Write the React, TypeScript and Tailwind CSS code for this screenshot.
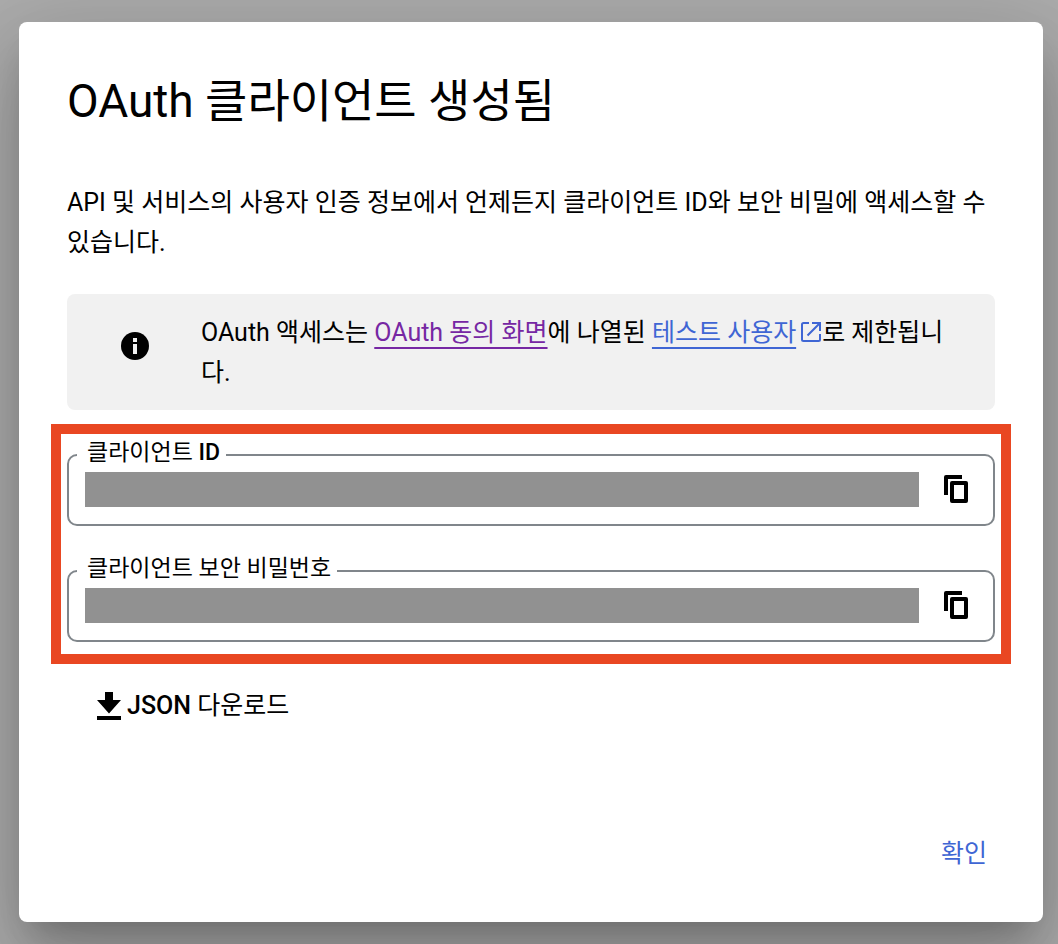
import type { ReactNode } from "react";

function InfoIcon() {
  return (
    <svg className="size-7 shrink-0" viewBox="0 0 28 28" aria-hidden="true">
      <circle cx="14" cy="14" r="14" fill="#000" />
      <path d="M12 6h4v4h-4zM12 12h4v10h-4z" fill="#f1f1f1" />
    </svg>
  );
}

function ExternalIcon() {
  return (
    <svg
      className="mr-px ml-[5px] inline-block size-5 align-[-1px]"
      viewBox="0 0 20 20"
      fill="none"
      stroke="#3f66d4"
      strokeWidth="2"
      aria-hidden="true"
    >
      <path d="M8 1H2.500Q1 1 1 2.500V17.500Q1 19 2.500 19H17.500Q19 19 19 17.500V12" />
      <path d="M11 1H19V9M19 1L6.500 13.500" />
    </svg>
  );
}

function CopyIcon() {
  return (
    <svg className="h-7 w-6" viewBox="0 0 24 28" aria-hidden="true">
      <path d="M2 0H18V4H4V20H0V2Q0 0 2 0Z" />
      <path
        fillRule="evenodd"
        d="M8 6H22Q24 6 24 8V26Q24 28 22 28H8Q6 28 6 26V8Q6 6 8 6ZM10 10V24H20V10Z"
      />
    </svg>
  );
}

function DownloadIcon() {
  return (
    <svg className="h-7 w-6" viewBox="0 0 24 28" aria-hidden="true">
      <path d="M8 0h8v8h8L12 21.500 0 8h8zM0 24h24v4H0z" />
    </svg>
  );
}

function SecretField({ id, label }: { id: string; label: ReactNode }) {
  return (
    <div className="relative flex h-[72px] items-start rounded-[10px] border-2 border-[#80868b] pt-4 pr-[25px] pl-4">
      <label
        htmlFor={id}
        className="absolute -top-[19px] left-2 bg-white pr-1.5 pl-2.5 text-[23px] leading-8 whitespace-nowrap"
      >
        {label}
      </label>
      <input id={id} readOnly className="relative h-[35px] min-w-0 flex-1 bg-[#919191] outline-none" />
      <button type="button" aria-label="복사" className="mt-[3px] ml-[25px]">
        <CopyIcon />
      </button>
    </div>
  );
}

export default function App() {
  return (
    <div className="flex min-h-screen flex-col overflow-hidden bg-[#acacac] pt-[22px] pr-[15px] pb-[22px] pl-[19px] font-['Roboto','Noto_Sans_CJK_KR',sans-serif] text-[25px] text-black">
      <main
        role="dialog"
        aria-labelledby="dialog-title"
        className="flex flex-1 flex-col rounded-lg bg-white px-12 pt-[47px] pb-12 shadow-[0_22px_30px_-14px_rgba(0,0,0,0.2),0_48px_76px_6px_rgba(0,0,0,0.14),0_18px_92px_16px_rgba(0,0,0,0.12)]"
      >
        <h1 id="dialog-title" className="text-[46px] leading-[64px]">
          OAuth 클라이언트 생성됨
        </h1>
        <p className="mt-[50px] leading-10">
          API 및 서비스의 사용자 인증 정보에서 언제든지 클라이언트 ID와 보안 비밀에 액세스할 수 있습니다.
        </p>
        <div className="mt-[31px] flex items-start rounded-lg bg-[#f1f1f1] pt-[19px] pr-10 pb-[17px] pl-[54px]">
          <div className="mt-[19px] mr-[52px]">
            <InfoIcon />
          </div>
          <p className="min-w-0 flex-1 leading-10">
            OAuth 액세스는{" "}
            <a
              href="#consent"
              className="text-[#7627a3] underline decoration-2 underline-offset-[6px] [text-decoration-skip-ink:none]"
            >
              OAuth 동의 화면
            </a>
            에 나열된{" "}
            <a
              href="#testers"
              className="text-[#3f66d4] underline decoration-2 underline-offset-[6px] [text-decoration-skip-ink:none]"
            >
              테스트 사용자
            </a>
            <ExternalIcon />로 제한됩니다.
          </p>
        </div>
        <section className="-mx-4 mt-[14px] flex flex-col gap-11 border-[10px] border-[#e94722] px-1.5 pt-5 pb-3">
          <SecretField
            id="client-id"
            label={
              <>
                클라이언트 <span className="font-medium">ID</span>
              </>
            }
          />
          <SecretField id="client-secret" label="클라이언트 보안 비밀번호" />
        </section>
        <button type="button" className="mt-[22px] ml-[30px] flex h-10 items-center gap-1.5 self-start">
          <DownloadIcon />
          <span>
            <span className="font-medium">JSON</span> 다운로드
          </span>
        </button>
        <footer className="mt-auto flex justify-end pr-2">
          <button type="button" className="leading-10 text-[#3f66d4]">
            확인
          </button>
        </footer>
      </main>
    </div>
  );
}
